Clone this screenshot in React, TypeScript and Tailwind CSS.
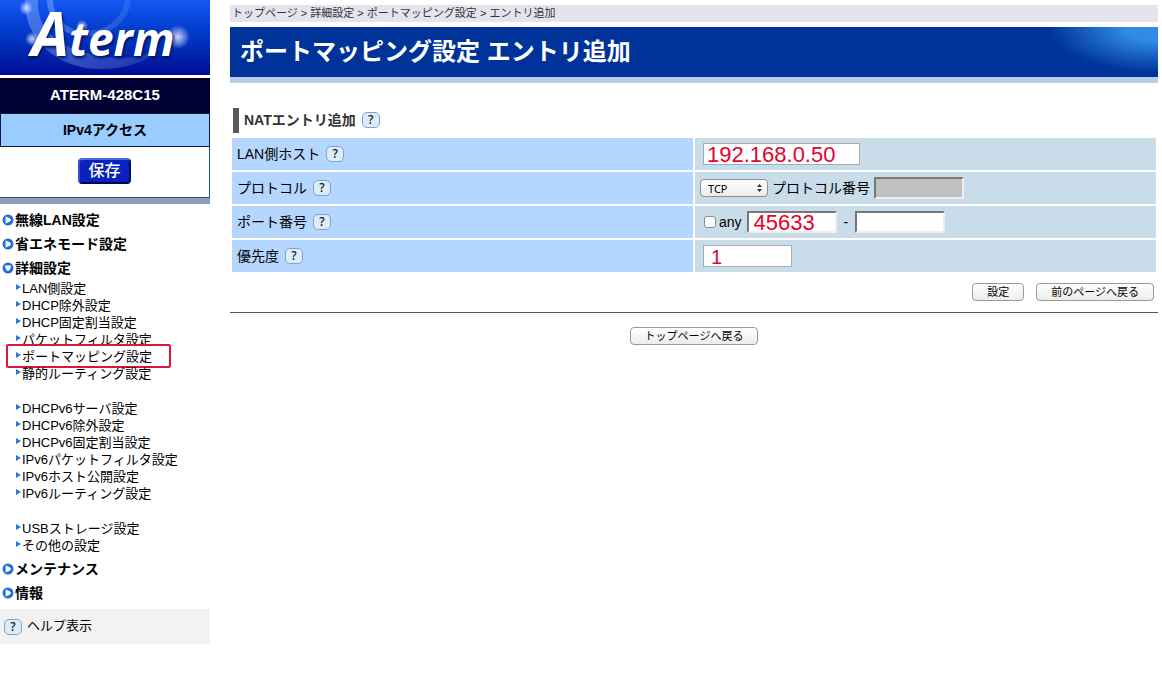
import type { ReactNode } from "react";

const detailMenu = [
  "LAN側設定",
  "DHCP除外設定",
  "DHCP固定割当設定",
  "パケットフィルタ設定",
  "ポートマッピング設定",
  "静的ルーティング設定",
  "",
  "DHCPv6サーバ設定",
  "DHCPv6除外設定",
  "DHCPv6固定割当設定",
  "IPv6パケットフィルタ設定",
  "IPv6ホスト公開設定",
  "IPv6ルーティング設定",
  "",
  "USBストレージ設定",
  "その他の設定",
];

const currentItem = "ポートマッピング設定";

function HelpButton({ label }: { label: string }) {
  return (
    <button
      type="button"
      aria-label={label}
      className="flex h-4 w-[18px] shrink-0 items-center justify-center rounded-[5px] border border-[#7fa3cc] bg-[#dcecfb] font-['Noto_Sans'] text-xs leading-none font-medium text-[#111]"
    >
      ?
    </button>
  );
}

function CircleIcon({ open }: { open?: boolean }) {
  return (
    <svg viewBox="0 0 12 12" className="h-3 w-3 shrink-0" aria-hidden="true">
      <circle cx="6" cy="6" r="5.5" fill="#2470d8" />
      {open ? (
        <path d="M2.6 3.6h6.8L7.8 7.6 6 9.2 4.2 7.6z" fill="#fff" />
      ) : (
        <path d="M3.6 2.6v6.8L7.6 7.8 9.2 6 7.6 4.2z" fill="#fff" />
      )}
    </svg>
  );
}

function MenuHeading({ title, open }: { title: string; open?: boolean }) {
  return (
    <a href="#" className="flex h-6 items-center gap-px pl-[2px] text-sm font-bold">
      <CircleIcon open={open} />
      {title}
    </a>
  );
}

function Row({
  label,
  htmlFor,
  children,
}: {
  label: string;
  htmlFor: string;
  children: ReactNode;
}) {
  return (
    <tr className="h-8">
      <th scope="row" className="w-1/2 bg-[#b5d6ff] px-[5px] text-left font-normal">
        <div className="flex items-center gap-[6px]">
          <label htmlFor={htmlFor}>{label}</label>
          <HelpButton label={`${label} ヘルプ`} />
        </div>
      </th>
      <td className="w-1/2 bg-[#c8dde9] px-[5px]">
        <div className="flex items-center">{children}</div>
      </td>
    </tr>
  );
}

function PushButton({ children }: { children: ReactNode }) {
  return (
    <button
      type="button"
      className="flex h-[18px] items-center rounded-[4px] border border-[#9a9a9a] bg-linear-to-b from-white to-[#ececec] px-3.5 pt-[2px] text-[11px]"
    >
      {children}
    </button>
  );
}

function Logo() {
  return (
    <div className="relative h-[75px] bg-linear-to-b from-[#1458f5] to-[#000b93]">
      <svg
        viewBox="0 0 210 75"
        className="absolute inset-0 h-full w-full"
        preserveAspectRatio="none"
        aria-hidden="true"
      >
        <defs>
          <radialGradient id="glow">
            <stop offset="0" stopColor="#fff" stopOpacity="0.8" />
            <stop offset="0.5" stopColor="#cfdcff" stopOpacity="0.5" />
            <stop offset="1" stopColor="#cfdcff" stopOpacity="0" />
          </radialGradient>
          <linearGradient id="ring" x1="0" y1="0" x2="1" y2="0">
            <stop offset="0" stopColor="#9fc0ff" stopOpacity="0.4" />
            <stop offset="1" stopColor="#9fc0ff" stopOpacity="0.15" />
          </linearGradient>
        </defs>
        <path
          d="M25 0C24 40 58 69 100 69C126 69 146 62 158 50C140 58 122 60 104 56C64 52 36 32 38 0Z"
          fill="url(#ring)"
        />
        <path
          d="M50 0C50 18 64 34 86 34C108 34 126 20 128 0"
          fill="none"
          stroke="url(#ring)"
          strokeWidth="6"
        />
        <circle cx="26" cy="8" r="7" fill="url(#glow)" />
        <circle cx="32" cy="39" r="7" fill="url(#glow)" />
        <circle cx="82" cy="26" r="6" fill="url(#glow)" />
        <circle cx="178" cy="37" r="12" fill="url(#glow)" />
      </svg>
      <div className="relative flex h-[75px] items-baseline justify-center pt-[3px] pr-1 font-['Open_Sans'] font-bold text-white italic [text-shadow:1px_2px_3px_#00105a]">
        <span className="text-6xl leading-none">A</span>
        <span className="text-[46px] leading-none">term</span>
      </div>
    </div>
  );
}

function Sidebar() {
  return (
    <aside className="w-[210px] shrink-0">
      <Logo />
      <div className="mt-[3px] flex h-[35px] items-center justify-center bg-[#000033] pb-[2px] text-[15px] font-bold text-white">
        ATERM-428C15
      </div>
      <div className="flex h-[34px] items-center justify-center border border-[#0a1a3a] bg-[#99ccff] text-sm font-bold">
        IPv4アクセス
      </div>
      <div className="flex h-[51px] items-center justify-center border-r border-b border-[#1b5f80] pb-[2px]">
        <button
          type="button"
          className="h-[26px] w-[53px] rounded-[4px] border-2 border-t-[#4a6be0] border-r-[#00106e] border-b-[#00084d] border-l-[#3350cc] bg-[#0a22bd] text-base leading-none font-medium text-white"
        >
          保存
        </button>
      </div>
      <div className="h-[6px] bg-[#8c9db5]" />

      <nav className="pt-1">
        <MenuHeading title="無線LAN設定" />
        <MenuHeading title="省エネモード設定" />
        <MenuHeading title="詳細設定" open />
        <ul className="pb-[3px] text-[13px] leading-[17px]">
          {detailMenu.map((item, i) =>
            item === "" ? (
              <li key={i} className="h-[18px]" />
            ) : (
              <li key={i} className="relative h-[17px] pl-4">
                <a href="#" className="flex items-center gap-px">
                  <svg viewBox="0 0 5 6" className="mb-1 h-[6px] w-[5px]" aria-hidden="true">
                    <path d="M0 0v6l5-3z" fill="#2a78dc" />
                  </svg>
                  {item}
                </a>
                {item === currentItem && (
                  <span className="pointer-events-none absolute -top-1 left-[6px] h-6 w-[165px] rounded-[2px] border-2 border-[#e0143a]" />
                )}
              </li>
            )
          )}
        </ul>
        <MenuHeading title="メンテナンス" />
        <MenuHeading title="情報" />
      </nav>

      <div className="mt-1 flex h-[35px] items-center gap-[5px] bg-[#f2f2f2] pl-1 text-[13px]">
        <HelpButton label="ヘルプ" />
        <a href="#">ヘルプ表示</a>
      </div>
    </aside>
  );
}

const sunkenInput =
  "h-[22px] w-[90px] border-2 border-t-[#777] border-r-[#eee] border-b-[#eee] border-l-[#777] px-[5px] pt-[2px] text-[22px] leading-none text-[#e6002d]";
const flatInput =
  "ml-[3px] h-[22px] border border-[#a5adb3] bg-white pt-[2px] leading-none text-[#e6002d]";

export default function App() {
  return (
    <div className="flex min-h-screen gap-5 bg-white pr-1 font-['Liberation_Sans','Noto_Sans_CJK_JP',sans-serif] text-sm text-black">
      <Sidebar />

      <main className="min-w-0 flex-1 pt-[5px]">
        <div className="flex h-[17px] items-center bg-[#e4e4ee] pl-[2px] text-[11px] text-[#333]">
          トップページ &gt; 詳細設定 &gt; ポートマッピング設定 &gt; エントリ追加
        </div>

        <h1 className="mt-[5px] flex h-14 items-center border-b-[6px] border-[#b5cce2] bg-[#003399] bg-[radial-gradient(ellipse_110px_46px_at_top_right,#2f8be6_30%,transparent)] bg-no-repeat pl-2.5 text-2xl font-bold text-white">
          ポートマッピング設定 エントリ追加
        </h1>

        <div className="mt-[25px] ml-[3px] flex h-[25px] items-center gap-[6px] border-l-[6px] border-[#595959] pb-[2px] pl-[5px]">
          <h2 className="font-bold text-[#333]">NATエントリ追加</h2>
          <HelpButton label="NATエントリ追加 ヘルプ" />
        </div>

        <form className="mt-[3px]">
          <table className="w-full table-fixed border-separate border-spacing-[2px]">
            <tbody>
              <Row label="LAN側ホスト" htmlFor="host">
                <input
                  id="host"
                  defaultValue="192.168.0.50"
                  className={`${flatInput} w-[157px] px-[3px] text-[22px]`}
                />
              </Row>
              <Row label="プロトコル" htmlFor="protocol">
                <span className="relative flex">
                  <select
                    id="protocol"
                    className="h-[18px] w-[68px] appearance-none rounded-[4px] border border-[#8f8f8f] bg-linear-to-b from-white to-[#ececec] pl-[7px] font-['Noto_Sans'] text-[11px] leading-none"
                  >
                    <option>TCP</option>
                    <option>UDP</option>
                  </select>
                  <svg
                    viewBox="0 0 5 8"
                    className="pointer-events-none absolute top-[5px] right-[6px] h-2 w-[5px]"
                    aria-hidden="true"
                  >
                    <path d="M0 3l2.5-3L5 3zM0 5l2.5 3L5 5z" fill="#333" />
                  </svg>
                </span>
                <label htmlFor="protocol-no" className="ml-1">
                  プロトコル番号
                </label>
                <input id="protocol-no" disabled className={`${sunkenInput} ml-1 bg-[#c0c0c0]`} />
              </Row>
              <Row label="ポート番号" htmlFor="port-from">
                <input
                  id="any"
                  type="checkbox"
                  className="ml-1 h-3 w-3 appearance-none rounded-[3px] border border-[#8a8a8a] bg-white"
                />
                <label htmlFor="any" className="ml-[3px]">
                  any
                </label>
                <input
                  id="port-from"
                  defaultValue="45633"
                  className={`${sunkenInput} ml-[5px] bg-white`}
                />
                <span className="mx-[7px]">-</span>
                <input aria-label="ポート番号 終了" className={`${sunkenInput} bg-white`} />
              </Row>
              <Row label="優先度" htmlFor="priority">
                <input
                  id="priority"
                  defaultValue="1"
                  className={`${flatInput} w-[89px] px-[7px] text-xl`}
                />
              </Row>
            </tbody>
          </table>

          <div className="mt-[9px] flex justify-end gap-3 pr-1">
            <PushButton>設定</PushButton>
            <PushButton>前のページへ戻る</PushButton>
          </div>
        </form>

        <hr className="mt-[11px] border-[#555]" />

        <div className="mt-3.5 flex justify-center">
          <PushButton>トップページへ戻る</PushButton>
        </div>
      </main>
    </div>
  );
}
